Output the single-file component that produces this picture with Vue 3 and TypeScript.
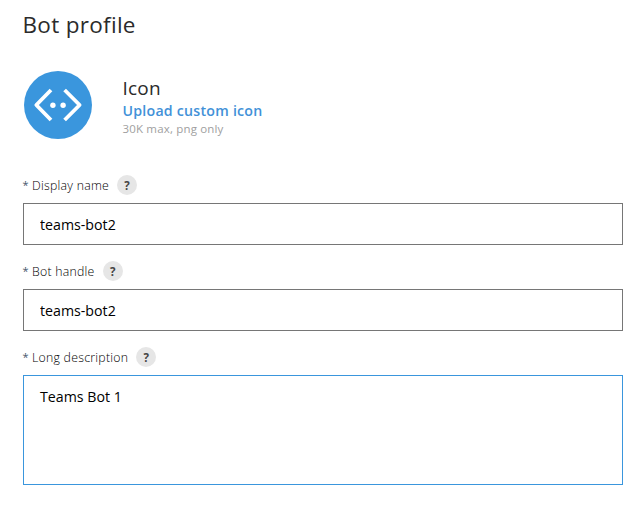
<script setup lang="ts">
import { ref } from 'vue'

interface Field {
  id: string
  label: string
  value: string
  multiline?: boolean
}

const fields = ref<Field[]>([
  { id: 'display', label: 'Display name', value: 'teams-bot2' },
  { id: 'handle', label: 'Bot handle', value: 'teams-bot2' },
  { id: 'description', label: 'Long description', value: 'Teams Bot 1', multiline: true },
])
</script>

<template>
  <main class="profile">
    <h1 class="title">Bot profile</h1>
    <section class="icon-row">
      <svg class="bot-icon" viewBox="0 0 68 68">
        <circle cx="34" cy="34" r="34" fill="#3a96dd" />
        <path d="M27 19 12.3 34 27 49M40.6 19 55.6 34 40.6 49" fill="none" stroke="#fff" stroke-width="3.8" stroke-linejoin="round" />
        <circle cx="28.9" cy="34.3" r="2.7" fill="#fff" />
        <circle cx="39.1" cy="34.3" r="2.7" fill="#fff" />
      </svg>
      <div class="icon-info">
        <div class="icon-name">Icon</div>
        <a class="upload">Upload custom icon</a>
        <div class="hint">30K max, png only</div>
      </div>
    </section>
    <form class="fields">
      <div v-for="field in fields" :key="field.id" class="field">
        <div class="label-row">
          <span class="star">*</span>
          <label :for="field.id" class="label">{{ field.label }}</label>
          <span class="help">?</span>
        </div>
        <textarea v-if="field.multiline" :id="field.id" v-model="field.value" class="control area" spellcheck="false"></textarea>
        <input v-else :id="field.id" v-model="field.value" class="control" type="text" spellcheck="false" />
      </div>
    </form>
  </main>
</template>

<style>
body {
  background: #fff;
}
</style>

<style scoped>
.profile {
  box-sizing: border-box;
  width: 643px;
  height: 506px;
  padding: 9px 20px 0 23px;
  font-family: 'Segoe UI', 'Open Sans', sans-serif;
  color: #2b2b2b;
}
.title {
  margin: 0 0 0 -0.5px;
  font-size: 22.5px;
  line-height: 32px;
  font-weight: 400;
  letter-spacing: 0.3px;
}
.icon-row {
  display: flex;
  gap: 30.5px;
  margin-top: 30px;
  padding-left: 1px;
}
.bot-icon {
  width: 68px;
  height: 68px;
}
.icon-info {
  display: flex;
  flex-direction: column;
  padding-top: 5px;
  white-space: nowrap;
}
.icon-name {
  font-size: 19px;
  line-height: 25px;
  letter-spacing: 0.2px;
}
.upload {
  font-size: 14.2px;
  line-height: 20px;
  font-weight: 600;
  letter-spacing: 0.23px;
  color: #4291d8;
}
.hint {
  font-size: 11.5px;
  line-height: 16px;
  letter-spacing: 0.17px;
  color: #a0a0a0;
}
.fields {
  display: flex;
  flex-direction: column;
  gap: 16px;
  margin-top: 36px;
}
.field {
  display: flex;
  flex-direction: column;
  gap: 8px;
}
.label-row {
  display: flex;
  align-items: center;
  height: 20px;
  font-size: 12.3px;
  line-height: 20px;
  color: #444;
}
.star {
  width: 9px;
  margin-left: -0.5px;
  font-size: 11px;
  color: #46576b;
}
.label {
  margin-left: 0.5px;
  padding-top: 2px;
  font-weight: 300;
  letter-spacing: 0.25px;
  color: #000;
  white-space: nowrap;
}
.help {
  width: 20px;
  height: 20px;
  margin-left: 8px;
  border-radius: 50%;
  background: #e6e6e6;
  font-size: 11.5px;
  line-height: 21px;
  font-weight: 700;
  text-align: center;
}
.control {
  box-sizing: border-box;
  width: 600px;
  height: 42px;
  margin: 0;
  padding: 0 16px;
  border: 1px solid #767676;
  border-radius: 0;
  outline: none;
  background: #fff;
  color: #000;
  font-family: inherit;
  font-size: 14.2px;
  line-height: 20px;
}
.area {
  height: 110px;
  padding-top: 11px;
  border-color: #3a96dd;
  resize: none;
}
</style>
